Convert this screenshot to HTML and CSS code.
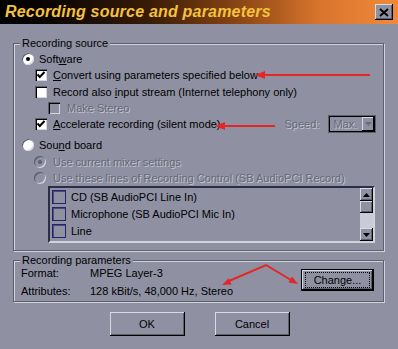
FILE: index.html
```html
<!DOCTYPE html>
<html lang="en">
<head>
    <meta charset="UTF-8">
    <title>Recording source and parameters</title>
    <link rel="stylesheet" href="styles.css">
</head>
<body>
    <div class="window">
        <div class="titlebar">
            <span class="title">Recording source and parameters</span>
            <span class="close">
                <svg width="10" height="9" viewBox="0 0 10 9"><path d="M1 1 L9 8 M9 1 L1 8" stroke="#000" stroke-width="2"/></svg>
            </span>
        </div>
        <div class="content">
            <fieldset class="group source">
                <legend>Recording source</legend>
                <div class="row lvl0"><span class="radio on"></span><span>Soft<u>w</u>are</span></div>
                <div class="row lvl1"><span class="check on"><svg width="12" height="12" viewBox="0 0 12 12"><path d="M2.5 5.5 L4.8 8 L9.5 3" fill="none" stroke="#000" stroke-width="2"/></svg></span><span><u>C</u>onvert using parameters specified below</span></div>
                <div class="row lvl1 sp1"><span class="check"></span><span>Record also <u>i</u>nput stream (Internet telephony only)</span></div>
                <div class="row lvl2 disabled"><span class="check off"></span><span>Make Stereo</span></div>
                <div class="row lvl1">
                    <span class="check on"><svg width="12" height="12" viewBox="0 0 12 12"><path d="M2.5 5.5 L4.8 8 L9.5 3" fill="none" stroke="#000" stroke-width="2"/></svg></span>
                    <span><u>A</u>ccelerate recording (silent mode)</span>
                    <span class="speed disabled">Speed:</span>
                    <span class="combo"><span class="combo-text">Max.</span><span class="combo-btn"><svg width="7" height="4" viewBox="0 0 7 4"><path d="M0 0 H7 L3.5 4 Z" fill="#6a6c7a"/></svg></span></span>
                </div>
                <div class="row lvl0 sp5"><span class="radio"></span><span>Sou<u>n</u>d board</span></div>
                <div class="row lvl1r disabled sp1"><span class="radio off sel"></span><span>Use current mixer settings</span></div>
                <div class="row lvl1r disabled"><span class="radio off"></span><span>Use these lines of Recording Control (SB AudioPCI Record)</span></div>
                <div class="listbox">
                    <div class="items">
                        <div class="item"><span class="box"></span><span>CD (SB AudioPCI Line In)</span></div>
                        <div class="item"><span class="box"></span><span>Microphone (SB AudioPCI Mic In)</span></div>
                        <div class="item"><span class="box"></span><span>Line</span></div>
                        <div class="item"><span class="box"></span></div>
                    </div>
                    <div class="scrollbar">
                        <span class="sb-btn"><svg width="7" height="4" viewBox="0 0 7 4"><path d="M3.5 0 L7 4 H0 Z" fill="#000"/></svg></span>
                        <span class="sb-thumb"></span>
                        <span class="sb-track"></span>
                        <span class="sb-btn"><svg width="7" height="4" viewBox="0 0 7 4"><path d="M0 0 H7 L3.5 4 Z" fill="#000"/></svg></span>
                    </div>
                </div>
            </fieldset>

            <fieldset class="group params">
                <legend>Recording parameters</legend>
                <div class="param-body">
                    <div class="param-list">
                        <div class="param"><span class="param-key">Format:</span><span>MPEG Layer-3</span></div>
                        <div class="param"><span class="param-key">Attributes:</span><span>128 kBit/s, 48,000 Hz, Stereo</span></div>
                    </div>
                    <div class="btn focus change"><span class="focus-ring">Change...</span></div>
                </div>
            </fieldset>

            <div class="actions">
                <div class="btn">OK</div>
                <div class="btn">Cancel</div>
            </div>
        </div>

        <svg class="arrows" width="398" height="349" viewBox="0 0 398 349">
            <g stroke="#e42626" stroke-width="2" fill="none">
                <path d="M370 75 H262"/>
                <path d="M275 126 H222"/>
                <path d="M229 281 L266 265 L291 280"/>
            </g>
            <g fill="#e42626">
                <polygon points="255,75 265,71 265,79"/>
                <polygon points="215,126 225,122 225,130"/>
                <polygon points="222,285 231.6,284.6 228.8,278.2"/>
                <polygon points="298,284 288.4,282.5 292,276.5"/>
            </g>
        </svg>
    </div>
</body>
</html>
```

FILE: styles.css
```css
body {
    margin: 0;
    font-family: 'Liberation Sans', Arial, sans-serif;
    font-size: 11px;
    color: #000;
    background: #8f91a3;
}
.window {
    position: relative;
    width: 398px;
    height: 349px;
    overflow: hidden;
    background: #8f91a3;
}
.titlebar {
    height: 24px;
    display: flex;
    align-items: center;
    justify-content: space-between;
    padding: 0 5px 0 5px;
    background: linear-gradient(90deg, #000 0%, #0c0602 14%, #3a1c06 38%, #8a4614 60%, #d8742c 80%, #f08a3a 100%);
}
.title {
    font-size: 16px;
    font-weight: 700;
    font-style: italic;
    color: #f4c23c;
    letter-spacing: 0.2px;
}
.close {
    width: 18px;
    height: 16px;
    display: flex;
    align-items: center;
    justify-content: center;
    background: #8f91a3;
    box-shadow: inset -1px -1px 0 #000, inset 1px 1px 0 #d8dae2, inset -2px -2px 0 #5d5f6d;
}
.content {
    padding-top: 13px;
}
.group {
    margin: 0 0 0 13px;
    width: 371px;
    box-sizing: border-box;
    padding: 0;
    border: 1px solid #5d5f6d;
    box-shadow: inset 1px 1px 0 #d0d2dc, 1px 1px 0 #d0d2dc;
}
.group legend {
    margin-left: 6px;
    padding: 0 2px;
    line-height: 13px;
    background: #8f91a3;
}
.row {
    height: 16px;
    display: flex;
    align-items: center;
    gap: 5px;
    white-space: nowrap;
}
.lvl0 { padding-left: 8px; }
.lvl1 { padding-left: 21px; gap: 6px; }
.lvl1r { padding-left: 20px; gap: 7px; }
.lvl2 { padding-left: 34px; gap: 7px; }
.sp1 { margin-top: 1px; }
.sp5 { margin-top: 5px; }
.source {
    padding: 1px 0 7px 0;
}
.disabled {
    color: #676977;
    text-shadow: 1px 1px 0 #c4c6d2;
}
.radio {
    flex: none;
    width: 12px;
    height: 12px;
    border-radius: 50%;
    background: #fff;
    box-shadow: inset 1px 1px 0 #55576a, inset -1px -1px 0 #d4d6de;
    display: flex;
    align-items: center;
    justify-content: center;
}
.radio.on::after {
    content: '';
    width: 4px;
    height: 4px;
    border-radius: 50%;
    background: #000;
}
.radio.off {
    background: #8f91a3;
}
.radio.sel::after {
    content: '';
    width: 4px;
    height: 4px;
    border-radius: 50%;
    background: #5d5f6d;
}
.check {
    flex: none;
    width: 12px;
    height: 12px;
    background: #fff;
    box-shadow: inset 1px 1px 0 #5d5f6d, inset 2px 2px 0 #000, inset -1px -1px 0 #d4d6de;
}
.check svg {
    display: block;
}
.check.off {
    background: #8f91a3;
}
.speed {
    margin-left: 58px;
}
.combo {
    margin-left: 4px;
    width: 46px;
    height: 16px;
    box-sizing: border-box;
    border: 1px solid #000;
    box-shadow: 0 0 0 1px #5d5f6d;
    display: flex;
    align-items: center;
    justify-content: space-between;
    padding-left: 3px;
}
.combo-text {
    color: #676977;
    text-shadow: 1px 1px 0 #c4c6d2;
}
.combo-btn {
    width: 12px;
    height: 14px;
    display: flex;
    align-items: center;
    justify-content: center;
    box-shadow: inset -1px -1px 0 #000, inset 1px 1px 0 #d8dae2;
}
.listbox {
    margin: 0 0 0 34px;
    width: 327px;
    height: 57px;
    box-sizing: border-box;
    border-style: solid;
    border-width: 2px;
    border-color: #2c2e48 #d0d2dc #d0d2dc #2c2e48;
    display: flex;
    overflow: hidden;
}
.items {
    flex: 1;
    overflow: hidden;
}
.item {
    height: 17px;
    display: flex;
    align-items: center;
    gap: 5px;
    padding-left: 2px;
    white-space: nowrap;
}
.box {
    flex: none;
    width: 14px;
    height: 14px;
    box-sizing: border-box;
    border: 1px solid #23246a;
    box-shadow: inset 1px 1px 0 #4a4c80;
}
.scrollbar {
    width: 13px;
    display: flex;
    flex-direction: column;
}
.sb-btn, .sb-thumb {
    flex: none;
    height: 13px;
    display: flex;
    align-items: center;
    justify-content: center;
    background: #8f91a3;
    box-shadow: inset -1px -1px 0 #000, inset 1px 1px 0 #d8dae2, inset -2px -2px 0 #5d5f6d;
}
.sb-thumb {
    height: 12px;
}
.sb-track {
    flex: 1;
    background: #c9ccd6;
}
.params {
    margin-top: 3px;
    padding: 0 0 3px 0;
}
.params legend {
    line-height: 12px;
}
.param-body {
    display: flex;
    align-items: flex-start;
}
.param-list {
    flex: 1;
    padding-left: 7px;
    display: flex;
    flex-direction: column;
    gap: 4px;
}
.param {
    height: 14px;
    display: flex;
    align-items: center;
}
.param-key {
    width: 69px;
}
.btn {
    width: 75px;
    height: 24px;
    box-sizing: border-box;
    display: flex;
    align-items: center;
    justify-content: center;
    background: #8f91a3;
    box-shadow: inset -1px -1px 0 #000, inset 1px 1px 0 #d8dae2, inset -2px -2px 0 #5d5f6d;
}
.change {
    width: 73px;
    height: 22px;
    margin: 3px 9px 0 0;
    border: 1px solid #000;
}
.focus-ring {
    display: flex;
    align-items: center;
    justify-content: center;
    width: 63px;
    height: 14px;
    border: 1px dotted #000;
}
.actions {
    margin-top: 10px;
    display: flex;
    justify-content: center;
    gap: 30px;
    padding-left: 1px;
}
.arrows {
    position: absolute;
    top: 0;
    left: 0;
    pointer-events: none;
}
```
